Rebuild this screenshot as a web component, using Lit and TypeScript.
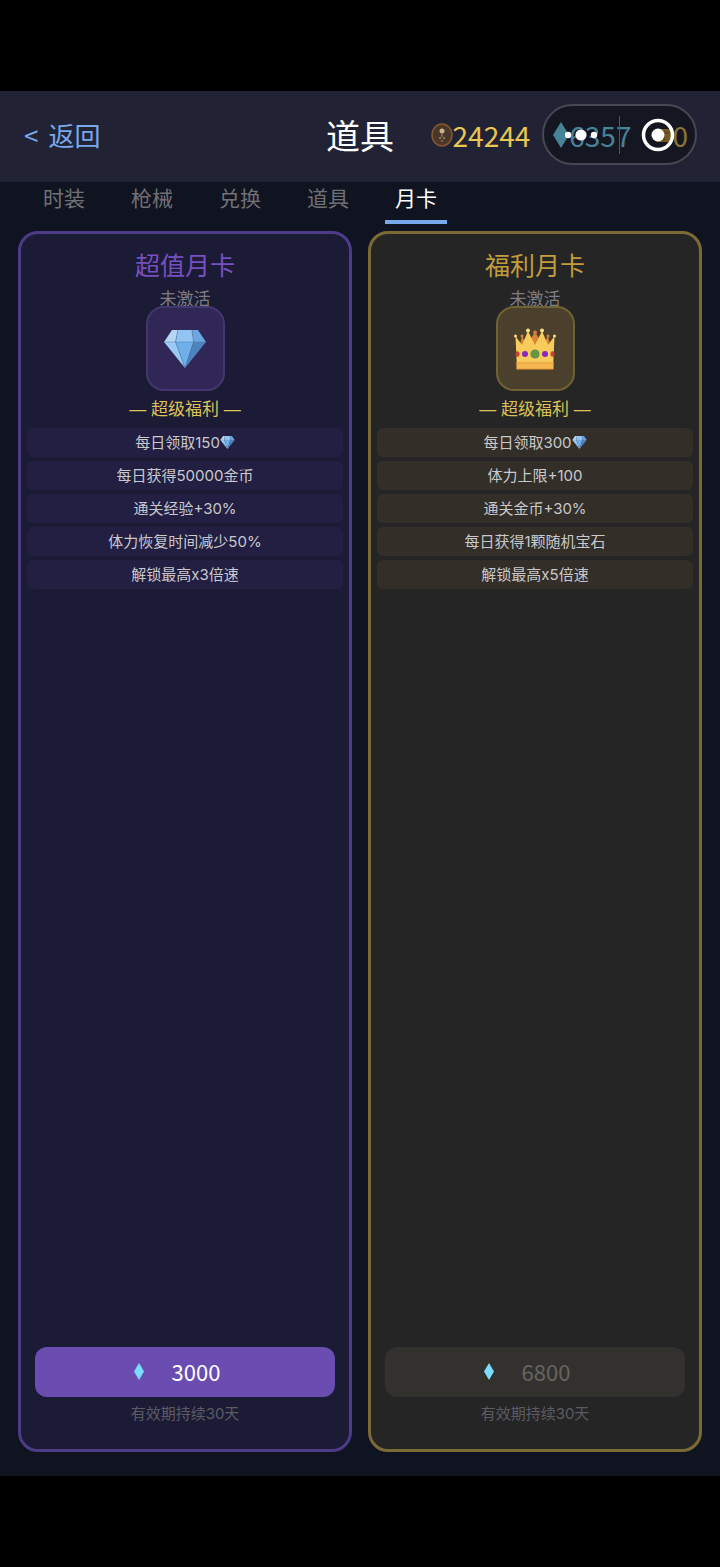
import { LitElement, html, css, svg } from "lit";
import { customElement, property, state } from "lit/decorators.js";
import { classMap } from "lit/directives/class-map.js";

interface Feature {
  text: string;
  gem?: boolean;
}

interface Plan {
  tone: "violet" | "gold";
  name: string;
  features: Feature[];
  price: number;
  affordable: boolean;
}

const PLANS: Plan[] = [
  {
    tone: "violet",
    name: "超值月卡",
    features: [
      { text: "每日领取150", gem: true },
      { text: "每日获得50000金币" },
      { text: "通关经验+30%" },
      { text: "体力恢复时间减少50%" },
      { text: "解锁最高x3倍速" },
    ],
    price: 3000,
    affordable: true,
  },
  {
    tone: "gold",
    name: "福利月卡",
    features: [
      { text: "每日领取300", gem: true },
      { text: "体力上限+100" },
      { text: "通关金币+30%" },
      { text: "每日获得1颗随机宝石" },
      { text: "解锁最高x5倍速" },
    ],
    price: 6800,
    affordable: false,
  },
];

const gemShapes = svg`
  <path d="M8 0H14L11.500 12H0Z" fill="#b5d5f2"/>
  <path d="M14 0H28L29.500 12H11.500Z" fill="#93c5f3"/>
  <path d="M28 0H34L42 12H29.500Z" fill="#6ba6e2"/>
  <path d="M0 12H11.500L21 38Z" fill="#9acbf5"/>
  <path d="M11.500 12H29.500L21 38Z" fill="#70afea"/>
  <path d="M29.500 12H42L21 38Z" fill="#4d84bd"/>
  <path d="M0 12H42M14 0 11.500 12 21 38 29.500 12 28 0" fill="none" stroke="#4b7fae" stroke-width=".5"/>`;

const crown = html`<svg viewBox="0 0 42 42" width="42" height="42" aria-hidden="true">
  <path d="M5 21 8 8 13 17 21 4 29 17 34 8 37 21Z" fill="#d98238" />
  <circle cx="8" cy="8" r="1.500" fill="#dc8440" />
  <circle cx="21" cy="4.500" r="2" fill="#dc7840" />
  <circle cx="34" cy="8" r="1.500" fill="#dc8440" />
  <path d="M3 41 1.500 8 8 17 14 3 21 17 28 3 34 17 40.500 8 39 41Z" fill="#f8cc5c" />
  <path d="M2.500 34.500H39.500V41H2.500Z" fill="#f5b850" />
  <path d="M2.500 35H39.500M2.500 41H39.500" stroke="#e79b3c" />
  <circle cx="1.500" cy="8" r="1.500" fill="#ffe088" />
  <circle cx="14" cy="2.500" r="2" fill="#ffe088" />
  <circle cx="28" cy="2.500" r="2" fill="#ffe088" />
  <circle cx="40.500" cy="8" r="1.500" fill="#ffe088" />
  <ellipse cx="3.500" cy="26" rx="2" ry="2.800" fill="#cb3f35" />
  <ellipse cx="38.500" cy="26" rx="2" ry="2.800" fill="#cb3f35" />
  <circle cx="11" cy="26" r="3" fill="#8927bd" />
  <circle cx="31" cy="26" r="3" fill="#8927bd" />
  <circle cx="21" cy="26" r="4.600" fill="#659641" />
</svg>`;

const gem = (width: number, height: number) =>
  html`<svg viewBox="0 0 42 38" width=${width} height=${height} aria-hidden="true">${gemShapes}</svg>`;

const rhombus = (width: number, height: number) =>
  html`<svg viewBox="0 0 10 16" width=${width} height=${height} preserveAspectRatio="none" aria-hidden="true">
    <path d="M5 0 10 8 5 16 0 8Z" fill="#7bdcff" />
  </svg>`;

@customElement("month-card")
export class MonthCard extends LitElement {
  static styles = css`
    :host {
      display: flex;
      flex: 1 1 0;
      min-width: 0;
    }
    .card {
      box-sizing: border-box;
      flex: 1;
      min-width: 0;
      display: flex;
      flex-direction: column;
      align-items: center;
      padding: 13px 6px 23px;
      border: 3px solid;
      border-radius: 20px;
    }
    .violet {
      --accent: #7650c0;
      --row: #231f42;
      background: #1c1b35;
      border-color: #4d3b88;
    }
    .gold {
      --accent: #c19d3c;
      --row: #332f28;
      background: #252525;
      border-color: #7c6a35;
    }
    .name {
      margin: 0;
      font-size: 25px;
      line-height: 34px;
      font-weight: 400;
      color: var(--accent);
    }
    .status {
      margin: 5px 0 0;
      font-size: 17px;
      line-height: 24px;
      color: #7d7d84;
    }
    .emblem {
      box-sizing: border-box;
      width: 79px;
      height: 85px;
      margin-top: -4px;
      display: grid;
      place-items: center;
      border: 2px solid;
      border-radius: 18px;
    }
    .violet .emblem {
      background: #302757;
      border-color: #44366f;
    }
    .gold .emblem {
      background: #4a402b;
      border-color: #716234;
    }
    .label {
      margin: 5px 0 4px;
      font-family: "Liberation Sans", "Noto Sans CJK SC", sans-serif;
      font-size: 17px;
      line-height: 28px;
      color: #dcc257;
    }
    .features {
      align-self: stretch;
      display: flex;
      flex-direction: column;
      gap: 4px;
      margin: 0;
      padding: 0;
      list-style: none;
    }
    .feature {
      display: flex;
      align-items: center;
      justify-content: center;
      border-radius: 6px;
      background: var(--row);
      font-family: Inter, "Noto Sans CJK SC", sans-serif;
      font-size: 15px;
      line-height: 29px;
      color: #c9c8cd;
    }
    .buy {
      align-self: stretch;
      display: flex;
      align-items: center;
      justify-content: center;
      gap: 28px;
      height: 50px;
      margin: auto 8px 0;
      padding: 0 16px 2px 0;
      border: 0;
      border-radius: 12px;
      background: #6b4db2;
      color: #fff;
      font: inherit;
      font-size: 22px;
    }
    .buy:disabled {
      background: #33312e;
      color: #666560;
    }
    .term {
      margin: 5px 0 0;
      font-family: Inter, "Noto Sans CJK SC", sans-serif;
      font-size: 15px;
      line-height: 24px;
      color: #5c5b63;
    }
  `;

  @property({ attribute: false }) plan!: Plan;

  render() {
    const p = this.plan;
    return html`<article class=${classMap({ card: true, [p.tone]: true })}>
      <h2 class="name">${p.name}</h2>
      <p class="status">未激活</p>
      <div class="emblem">${p.tone === "violet" ? gem(42, 38) : crown}</div>
      <p class="label">— 超级福利 —</p>
      <ul class="features">
        ${p.features.map((f) => html`<li class="feature"><span>${f.text}</span>${f.gem ? gem(15, 13) : ""}</li>`)}
      </ul>
      <button class="buy" type="button" ?disabled=${!p.affordable}>
        ${rhombus(10, 17)}<span>${p.price}</span>
      </button>
      <p class="term">有效期持续30天</p>
    </article>`;
  }
}

@customElement("app-root")
export class AppRoot extends LitElement {
  static styles = css`
    :host {
      box-sizing: border-box;
      display: flex;
      flex-direction: column;
      min-height: 100vh;
      padding: 91px 0;
      background: #000;
      font-family: "Noto Sans CJK SC", sans-serif;
    }
    .header {
      box-sizing: border-box;
      position: relative;
      display: grid;
      grid-template-columns: 1fr auto 1fr;
      align-items: center;
      height: 91px;
      padding: 0 24px 3px;
      background: #212334;
    }
    .back {
      justify-self: start;
      display: flex;
      gap: 10px;
      padding: 0;
      border: 0;
      background: none;
      color: #79a9ed;
      font: inherit;
      font-size: 26px;
      line-height: 40px;
    }
    .title {
      margin: 0;
      font-size: 34px;
      line-height: 50px;
      font-weight: 400;
      color: #fff;
    }
    .wallet {
      justify-self: end;
      display: flex;
      gap: 23px;
      padding-right: 8px;
      font-size: 28px;
      line-height: 40px;
      color: #eac652;
    }
    .amount {
      display: flex;
      align-items: center;
    }
    .gems {
      color: #7bdcff;
    }
    .capsule {
      position: absolute;
      right: 23px;
      top: 13px;
      box-sizing: border-box;
      width: 155px;
      height: 61px;
      display: grid;
      grid-template-columns: 1fr 1px 1fr;
      align-items: center;
      border: 2px solid #464852;
      border-radius: 31px;
      background: rgba(3, 4, 8, 0.42);
    }
    .capsule-button {
      display: grid;
      place-items: center;
      height: 100%;
      padding: 0;
      border: 0;
      background: none;
    }
    .divider {
      height: 38px;
      background: #51535d;
    }
    .main {
      flex: 1;
      display: flex;
      flex-direction: column;
      background: #101421;
    }
    .tabs {
      display: flex;
      gap: 26px;
      padding: 0 33px;
    }
    .tab {
      padding: 0 10px 8px;
      border: 0;
      border-bottom: 4px solid transparent;
      background: none;
      color: #707176;
      font: inherit;
      font-size: 21px;
      line-height: 30px;
    }
    .selected {
      color: #fff;
      border-bottom-color: #79a9ed;
    }
    .cards {
      flex: 1;
      display: flex;
      gap: 16px;
      padding: 7px 18px 24px;
    }
  `;

  @state() private selected = 4;

  private tabs = ["时装", "枪械", "兑换", "道具", "月卡"];

  render() {
    return html`
      <header class="header">
        <button class="back" type="button"><span>&lt;</span><span>返回</span></button>
        <h1 class="title">道具</h1>
        <div class="wallet">
          <span class="amount">
            <svg viewBox="0 0 22 24" width="22" height="24" aria-hidden="true">
              <ellipse cx="11" cy="12" rx="10" ry="11" fill="#523923" stroke="#80572f" stroke-width="1.500" />
              <ellipse cx="11" cy="12" rx="8" ry="9" fill="#49372a" />
              <circle cx="11" cy="8" r="2.500" fill="#cbb28b" />
              <path d="M11 10V14" stroke="#7c654a" stroke-width="2" />
              <circle cx="9" cy="15" r="1" fill="#a28b68" />
              <circle cx="13" cy="15" r="1" fill="#a28b68" />
              <circle cx="11" cy="18" r="1" fill="#8b7453" />
            </svg>24244</span>
          <span class="amount gems">${rhombus(16, 26)}6357</span>
          <span class="amount">
            <svg viewBox="0 0 18 16" width="18" height="16" aria-hidden="true">
              <rect x="2" y="2" width="15" height="13" rx="1" fill="#c79937" />
              <path d="M4 6H15M10 3V14" stroke="#80602a" stroke-width="1" />
            </svg>0</span>
        </div>
        <div class="capsule">
          <button class="capsule-button" type="button" aria-label="更多">
            <svg viewBox="0 0 34 12" width="34" height="12" aria-hidden="true">
              <circle cx="3" cy="6" r="3.200" fill="#fff" />
              <circle cx="16" cy="6" r="5.600" fill="#fff" />
              <circle cx="29" cy="6" r="3.200" fill="#fff" />
            </svg>
          </button>
          <span class="divider"></span>
          <button class="capsule-button" type="button" aria-label="关闭">
            <svg viewBox="0 0 34 34" width="34" height="34" aria-hidden="true">
              <circle cx="17" cy="17" r="14.500" fill="none" stroke="#fff" stroke-width="3.500" />
              <circle cx="17" cy="17" r="6.500" fill="#fff" />
            </svg>
          </button>
        </div>
      </header>
      <main class="main">
        <nav class="tabs">
          ${this.tabs.map(
            (name, i) => html`<button
              type="button"
              class=${classMap({ tab: true, selected: i === this.selected })}
              @click=${() => (this.selected = i)}
            >${name}</button>`
          )}
        </nav>
        <section class="cards">
          ${PLANS.map((plan) => html`<month-card .plan=${plan}></month-card>`)}
        </section>
      </main>
    `;
  }
}
